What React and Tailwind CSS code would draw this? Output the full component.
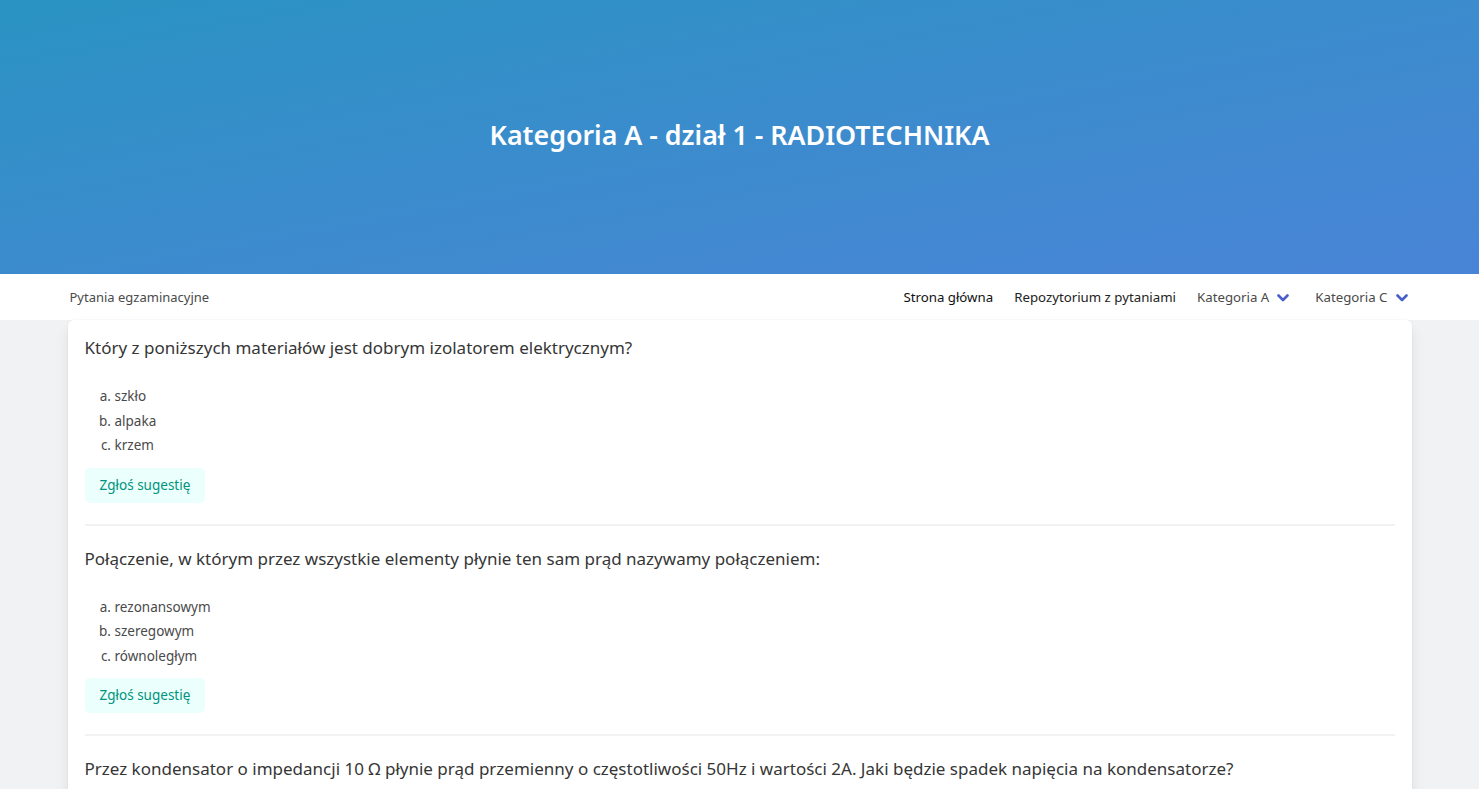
import React from "react";

const questions = [
  {
    q: "Który z poniższych materiałów jest dobrym izolatorem elektrycznym?",
    a: ["szkło", "alpaka", "krzem"],
  },
  {
    q: "Połączenie, w którym przez wszystkie elementy płynie ten sam prąd nazywamy połączeniem:",
    a: ["rezonansowym", "szeregowym", "równoległym"],
  },
  {
    q: "Przez kondensator o impedancji 10 Ω płynie prąd przemienny o częstotliwości 50Hz i wartości 2A. Jaki będzie spadek napięcia na kondensatorze?",
    a: ["20 V", "5 V", "200 V"],
  },
];

function Chevron() {
  return (
    <svg width="12" height="10" viewBox="0 0 12 10" className="ml-[8px]">
      <path d="M1.5 2.5 L6 7 L10.5 2.5" fill="none" stroke="#485fc7" strokeWidth="2.6" strokeLinecap="round" strokeLinejoin="round" />
    </svg>
  );
}

export default function App() {
  return (
    <div className="min-h-screen bg-[#f1f2f4]" style={{ fontFamily: '"Segoe UI", "Noto Sans", "Open Sans", sans-serif' }}>
      <section className="h-[274px] flex items-center justify-center bg-gradient-to-br from-[#2993c3] to-[#4984d7]">
        <h1 className="text-white text-[26.8px] font-semibold mb-[4px]">Kategoria A - dział 1 - RADIOTECHNIKA</h1>
      </section>
      <nav className="bg-white h-[46px]">
        <div className="max-w-[1344px] mx-auto h-full flex items-center justify-between pl-[2px] pr-[2px] pt-[2px]">
          <span className="text-[13px] text-[#4a4a4a]">Pytania egzaminacyjne</span>
          <div className="flex items-center text-[13.25px] text-[#363636] pr-[2px]">
            <span className="text-[#111]">Strona główna</span>
            <span className="text-[#222] ml-[21px]">Repozytorium z pytaniami</span>
            <span className="flex items-center text-[#4a4a4a] ml-[21px]">Kategoria A<Chevron /></span>
            <span className="flex items-center text-[#4a4a4a] ml-[26px]">Kategoria C<Chevron /></span>
          </div>
        </div>
      </nav>
      <main className="max-w-[1344px] mx-auto">
        <div className="bg-white rounded-t-[6px] shadow-[0_0.5em_1em_-0.125em_rgba(10,10,10,0.1),0_0_0_1px_rgba(10,10,10,0.02)] px-[17px]">
          {questions.map((item, i) => (
            <div key={i} className={i > 0 ? "border-t-2 border-[#f2f2f2] pt-[20px] pb-[21px]" : "pt-[15px] pb-[21px]"}>
              <h2 className="text-[17px] text-[#363636] leading-[26px] font-normal">{item.q}</h2>
              <ol className="list-[lower-alpha] pl-[30px] mt-[23px] text-[13.5px] text-[#4a4a4a] leading-[24.5px]">
                {item.a.map((ans, j) => (
                  <li key={j}>{ans}</li>
                ))}
              </ol>
              <button className="mt-[10px] h-[35px] px-[15px] rounded-[5px] bg-[#ebfffc] text-[#00947e] text-[13.5px]">Zgłoś sugestię</button>
            </div>
          ))}
        </div>
      </main>
    </div>
  );
}
